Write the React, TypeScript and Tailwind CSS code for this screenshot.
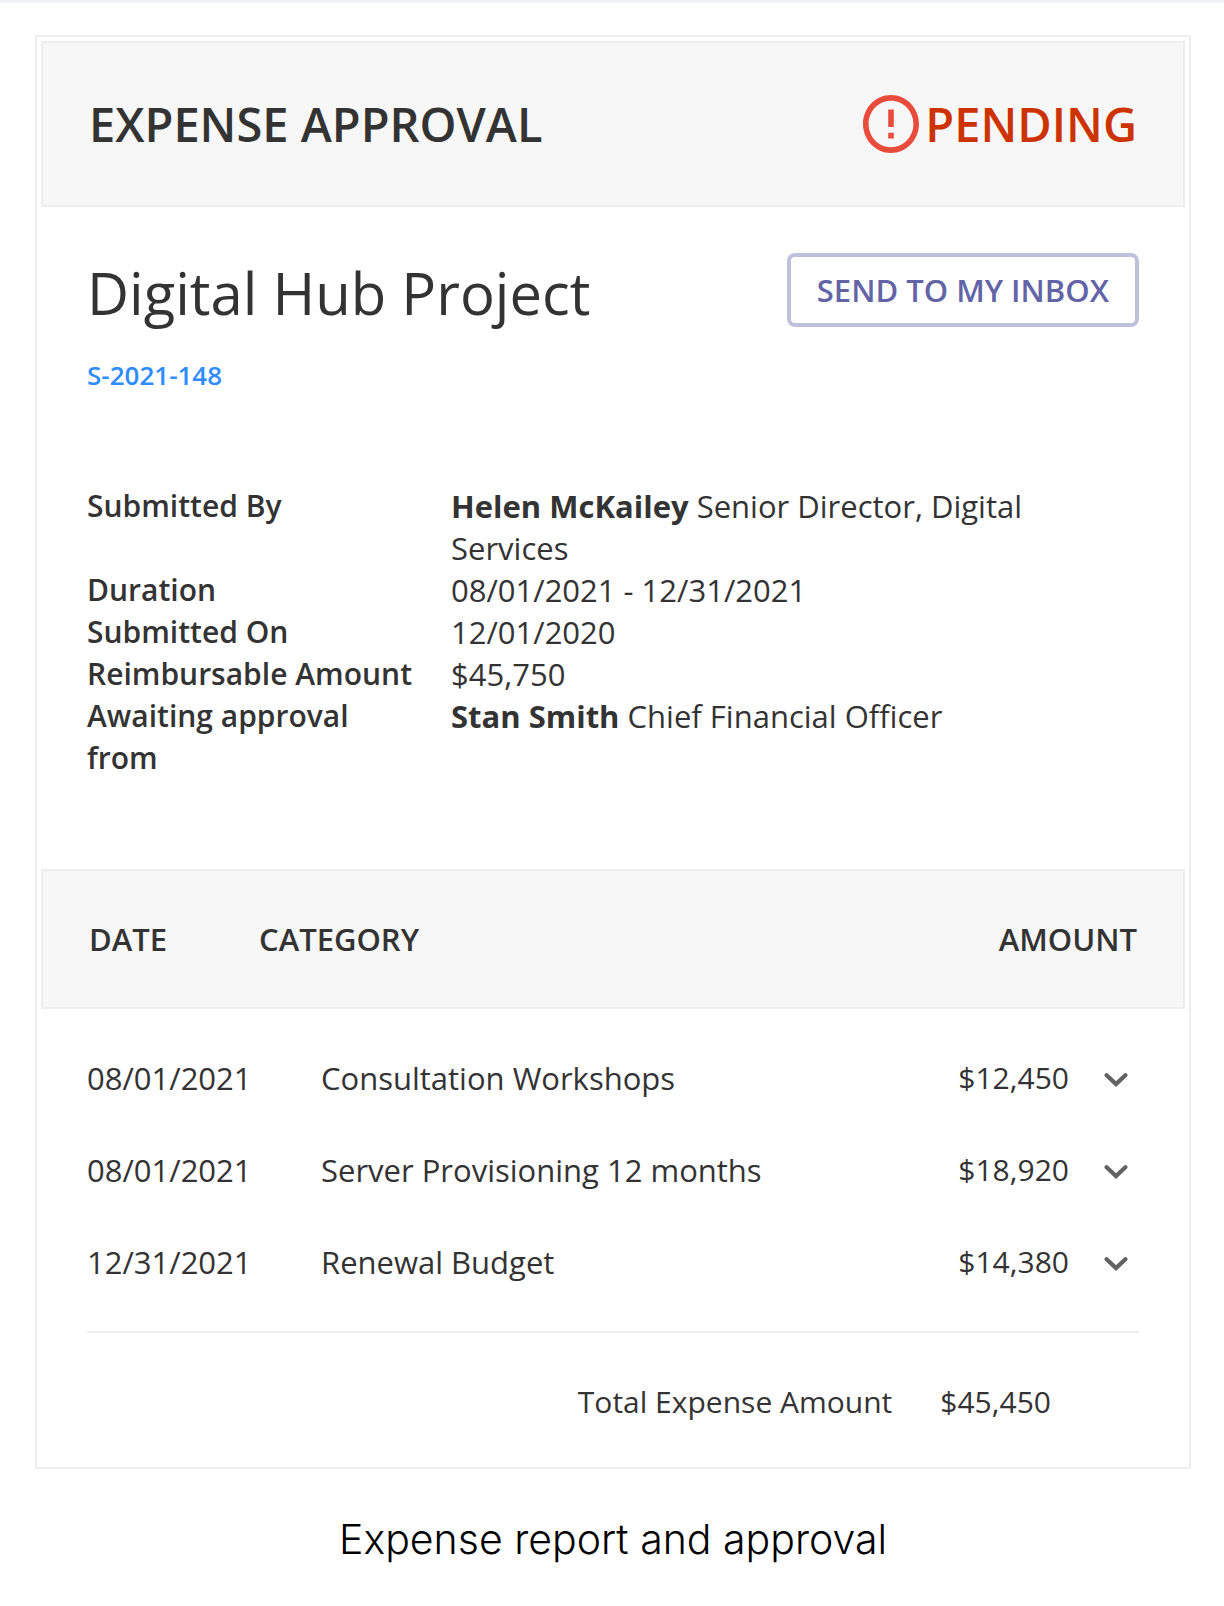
const details = [
  {
    label: "Submitted By",
    name: "Helen McKailey",
    value: "Senior Director, Digital Services",
  },
  { label: "Duration", value: "08/01/2021 - 12/31/2021" },
  { label: "Submitted On", value: "12/01/2020" },
  { label: "Reimbursable Amount", value: "$45,750" },
  {
    label: "Awaiting approval from",
    name: "Stan Smith",
    value: "Chief Financial Officer",
  },
];

const expenses = [
  { date: "08/01/2021", category: "Consultation Workshops", amount: "$12,450" },
  {
    date: "08/01/2021",
    category: "Server Provisioning 12 months",
    amount: "$18,920",
  },
  { date: "12/31/2021", category: "Renewal Budget", amount: "$14,380" },
];

function AlertIcon() {
  return (
    <svg
      className="h-[58px] w-14 shrink-0"
      viewBox="2 2 20 20"
      preserveAspectRatio="none"
      fill="#e94b3c"
      aria-hidden="true"
    >
      <path d="M11 15h2v2h-2zm0-8h2v6h-2zm.99-5C6.47 2 2 6.48 2 12s4.47 10 9.99 10C17.52 22 22 17.52 22 12S17.52 2 11.99 2zM12 20c-4.42 0-8-3.58-8-8s3.58-8 8-8 8 3.58 8 8-3.58 8-8 8z" />
    </svg>
  );
}

function ChevronIcon() {
  return (
    <svg
      className="h-3.5 w-6"
      viewBox="0 0 24 14"
      fill="none"
      stroke="#626262"
      strokeWidth="4.2"
      strokeLinecap="round"
      aria-hidden="true"
    >
      <path d="m2.6 2.2 9.4 8.9 9.4-8.9" />
    </svg>
  );
}

function StatusHeader() {
  return (
    <header className="flex items-center justify-between border-2 border-[#eeeeee] bg-[#f7f7f7] px-[46px] py-[49px] text-[47px] leading-16 font-semibold">
      <h1>EXPENSE APPROVAL</h1>
      <p className="flex items-center gap-1.5 text-[#cc3300]">
        <AlertIcon />
        PENDING
      </p>
    </header>
  );
}

function Summary() {
  return (
    <section className="px-[46px] pt-[46px] pb-[90px]">
      <div className="flex items-start justify-between">
        <h2 className="text-[58px] leading-20">Digital Hub Project</h2>
        <button
          type="button"
          className="rounded-lg border-4 border-[#bfc1dc] px-[26px] py-3 text-[31px] leading-[42px] font-semibold text-[#6264a7]"
        >
          SEND TO MY INBOX
        </button>
      </div>
      <a
        href="#expense"
        className="mt-6 inline-block text-[26px] leading-9 font-semibold text-[#2d8cff]"
      >
        S-2021-148
      </a>

      <dl className="mt-[92px] leading-[42px]">
        {details.map((item) => (
          <div key={item.label} className="flex">
            <dt className="w-[364px] shrink-0 pr-6 text-[30px] font-semibold">
              {item.label}
            </dt>
            <dd className="max-w-[640px] text-[31px]">
              {item.name && <strong className="font-bold">{item.name} </strong>}
              {item.value}
            </dd>
          </div>
        ))}
      </dl>
    </section>
  );
}

function ExpenseTable() {
  return (
    <table className="block text-[31px] leading-[42px]">
      <thead className="block border-2 border-[#eeeeee] bg-[#f7f7f7] px-[46px] py-[47px]">
        <tr className="flex text-left">
          <th className="w-[170px] font-semibold">DATE</th>
          <th className="flex-1 font-semibold">CATEGORY</th>
          <th className="font-semibold">AMOUNT</th>
        </tr>
      </thead>
      <tbody className="block px-[46px] py-[23px]">
        {expenses.map((item) => (
          <tr key={item.category} className="flex items-center py-[25px]">
            <td className="w-[234px]">{item.date}</td>
            <td className="flex-1">{item.category}</td>
            <td className="text-[30px]">{item.amount}</td>
            <td className="flex pt-1 pr-[11px] pl-[35px]">
              <button type="button" aria-label={`Show ${item.category}`}>
                <ChevronIcon />
              </button>
            </td>
          </tr>
        ))}
      </tbody>
      <tfoot className="mx-[46px] block border-t-2 border-[#eeeeee] pt-12 pb-10 text-[30px]">
        <tr className="flex justify-end gap-12 pr-[88px]">
          <th className="font-normal">Total Expense Amount</th>
          <td>$45,450</td>
        </tr>
      </tfoot>
    </table>
  );
}

export default function App() {
  return (
    <main className="border-t-[3px] border-[#f0f2fa] bg-white pt-8 pr-[33px] pb-8 pl-[35px]">
      <figure>
        <article className="border-2 border-[#eeeeee] p-1 font-['Open_Sans','Noto_Sans',sans-serif] text-[#333333]">
          <StatusHeader />
          <Summary />
          <ExpenseTable />
        </article>
        <figcaption className="mt-[38px] text-center font-['Inter',sans-serif] text-[41px] leading-16 font-light text-black">
          Expense report and approval
        </figcaption>
      </figure>
    </main>
  );
}
